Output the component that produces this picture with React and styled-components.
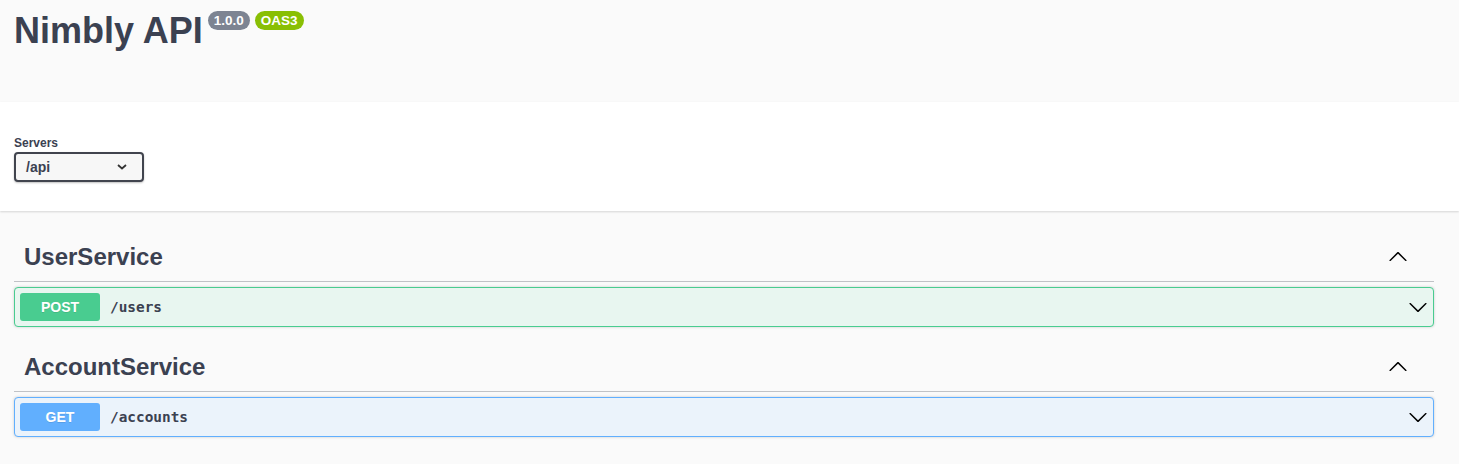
import React from "react";
import styled, { createGlobalStyle } from "styled-components";

const GlobalStyle = createGlobalStyle`
  body {
    margin: 0;
    background: #fafafa;
    font-family: "Liberation Sans", Arial, sans-serif;
    color: #3b4151;
  }
`;

const Header = styled.header`
  height: 102px;
  padding: 0 14px;
  box-sizing: border-box;
`;

const TitleRow = styled.div`
  display: flex;
  align-items: flex-start;
  padding-top: 7px;
`;

const Title = styled.h2`
  margin: 0;
  font-size: 36px;
  line-height: 48px;
  font-weight: 700;
  color: #3b4151;
`;

const Stamp = styled.span`
  display: inline-flex;
  align-items: center;
  justify-content: center;
  height: 19px;
  padding: 0 6px;
  margin: 4px 0 0 5px;
  border-radius: 57px;
  background: ${({ color }) => color};
  color: #fff;
  font-size: 13.5px;
  font-weight: 700;
  box-sizing: border-box;
`;

const SchemeBar = styled.section`
  background: #fff;
  height: 109px;
  padding: 34px 14px 0;
  box-sizing: border-box;
  box-shadow: 0 1px 2px 0 rgba(0, 0, 0, 0.15);
`;

const Label = styled.div`
  font-size: 12px;
  font-weight: 700;
  color: #3b4151;
  margin-bottom: 2px;
`;

const Select = styled.div`
  width: 130px;
  height: 30px;
  box-sizing: border-box;
  border: 2px solid #41444e;
  border-radius: 4px;
  background: #f7f7f7;
  box-shadow: 0 1px 2px 0 rgba(0, 0, 0, 0.25);
  display: flex;
  align-items: center;
  justify-content: space-between;
  padding: 0 15px 0 10px;
  font-size: 14px;
  font-weight: 700;
  color: #3b4151;
`;

const Operations = styled.main`
  padding: 21px 25px 20px 14px;
`;

const TagSection = styled.section`
  margin-bottom: 0;
`;

const TagHeading = styled.div`
  height: 49px;
  display: flex;
  align-items: center;
  justify-content: space-between;
  padding: 0 26px 0 10px;
  border-bottom: 1px solid rgba(59, 65, 81, 0.3);
  margin-bottom: 5px;
  font-size: 24px;
  font-weight: 700;
  color: #3b4151;
`;

const OpBlock = styled.div`
  border: 1px solid ${({ border }) => border};
  background: ${({ bg }) => bg};
  border-radius: 4px;
  box-shadow: 0 0 3px rgba(0, 0, 0, 0.19);
  margin-bottom: 15px;
`;

const Summary = styled.div`
  display: flex;
  align-items: center;
  padding: 5px;
`;

const Method = styled.span`
  min-width: 80px;
  height: 28px;
  display: inline-flex;
  align-items: center;
  justify-content: center;
  border-radius: 3px;
  background: ${({ bg }) => bg};
  color: #fff;
  font-size: 14px;
  font-weight: 700;
  text-shadow: 0 1px 0 rgba(0, 0, 0, 0.1);
`;

const Path = styled.span`
  flex: 1;
  padding: 0 10px;
  font-family: "DejaVu Sans Mono", "Liberation Mono", monospace;
  font-size: 14.4px;
  font-weight: 700;
  color: #3b4151;
`;

const Arrow = ({ up, size = 20 }) => (
  <svg
    width={size}
    height={size}
    viewBox="0 0 20 20"
    style={up ? { transform: "rotate(180deg)" } : undefined}
  >
    <path
      fill="#000"
      d="M17.418 6.109c.272-.268.709-.268.979 0s.271.701 0 .969l-7.908 7.83c-.27.268-.707.268-.979 0l-7.908-7.83c-.27-.268-.27-.701 0-.969.271-.268.709-.268.979 0L10 13.25l7.418-7.141z"
    />
  </svg>
);

const SmallChevron = () => (
  <svg width="10" height="6" viewBox="0 0 10 6">
    <path d="M1 1l4 3.5L9 1" fill="none" stroke="#333" strokeWidth="1.8" />
  </svg>
);

const tags = [
  {
    name: "UserService",
    method: "POST",
    path: "/users",
    color: "#49cc90",
    bg: "#e8f6f0",
  },
  {
    name: "AccountService",
    method: "GET",
    path: "/accounts",
    color: "#61affe",
    bg: "#ebf3fb",
  },
];

export default function App() {
  return (
    <>
      <GlobalStyle />
      <Header>
        <TitleRow>
          <Title>Nimbly API</Title>
          <Stamp color="#7d8492">1.0.0</Stamp>
          <Stamp color="#89bf04">OAS3</Stamp>
        </TitleRow>
      </Header>

      <SchemeBar>
        <Label>Servers</Label>
        <Select>
          <span>/api</span>
          <SmallChevron />
        </Select>
      </SchemeBar>

      <Operations>
        {tags.map((t) => (
          <TagSection key={t.name}>
            <TagHeading>
              <span>{t.name}</span>
              <Arrow up />
            </TagHeading>
            <OpBlock border={t.color} bg={t.bg}>
              <Summary>
                <Method bg={t.color}>{t.method}</Method>
                <Path>{t.path}</Path>
                <Arrow />
              </Summary>
            </OpBlock>
          </TagSection>
        ))}
      </Operations>
    </>
  );
}
